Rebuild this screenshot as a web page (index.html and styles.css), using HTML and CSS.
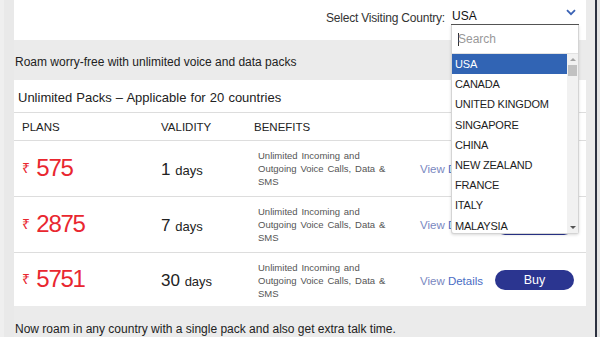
FILE: index.html
```html
<!DOCTYPE html>
<html>
<head>
<meta charset="utf-8">
<link rel="stylesheet" href="styles.css">
</head>
<body>
<div class="frame">
  <div class="gutter"></div>
  <main class="panel">
    <div class="top">
      <span class="select-label">Select Visiting Country:</span>
      <div class="select">
        <span class="select-value">USA</span>
        <svg class="chev" width="10" height="7" viewBox="0 0 10 7"><path d="M1 1.2 L5 5.2 L9 1.2" fill="none" stroke="#3b63b5" stroke-width="1.8"/></svg>
        <div class="dropdown">
          <div class="search"><span class="caret"></span><span class="ph">Search</span></div>
          <div class="list">
            <ul class="options">
              <li class="active">USA</li>
              <li>CANADA</li>
              <li>UNITED KINGDOM</li>
              <li>SINGAPORE</li>
              <li>CHINA</li>
              <li>NEW ZEALAND</li>
              <li>FRANCE</li>
              <li>ITALY</li>
              <li>MALAYSIA</li>
            </ul>
            <div class="scrollbar">
              <span class="arrow up"></span>
              <span class="thumb"></span>
              <span class="track"></span>
              <span class="arrow down"></span>
            </div>
          </div>
        </div>
      </div>
    </div>
    <p class="intro">Roam worry-free with unlimited voice and data packs</p>
    <section class="card">
      <h2 class="card-title">Unlimited Packs – Applicable for 20 countries</h2>
      <div class="row head">
        <span>PLANS</span><span>VALIDITY</span><span>BENEFITS</span><span></span><span></span>
      </div>
      <div class="row">
        <span class="price"><small>₹</small> 575</span>
        <span class="validity">1 <small>days</small></span>
        <span class="benefit">Unlimited Incoming and Outgoing Voice Calls, Data &amp; SMS</span>
        <span class="details"><span class="v">View</span> <span class="d">Details</span></span>
        <span class="buy-cell"><button class="buy">Buy</button></span>
      </div>
      <div class="row">
        <span class="price"><small>₹</small> 2875</span>
        <span class="validity">7 <small>days</small></span>
        <span class="benefit">Unlimited Incoming and Outgoing Voice Calls, Data &amp; SMS</span>
        <span class="details"><span class="v">View</span> <span class="d">Details</span></span>
        <span class="buy-cell"><button class="buy">Buy</button></span>
      </div>
      <div class="row last">
        <span class="price"><small>₹</small> 5751</span>
        <span class="validity">30 <small>days</small></span>
        <span class="benefit">Unlimited Incoming and Outgoing Voice Calls, Data &amp; SMS</span>
        <span class="details"><span class="v">View</span> <span class="d">Details</span></span>
        <span class="buy-cell"><button class="buy">Buy</button></span>
      </div>
    </section>
    <p class="note">Now roam in any country with a single pack and also get extra talk time.</p>
  </main>
  <div class="gap"></div>
  <div class="edge"></div>
  <div class="rest"></div>
</div>
</body>
</html>
```

FILE: styles.css
```css
html, body {
  margin: 0;
  padding: 0;
}
body {
  background: #ebebeb;
  font-family: "Liberation Sans", Arial, sans-serif;
  color: #222;
  width: 600px;
  height: 337px;
  overflow: hidden;
}
.frame {
  display: flex;
  height: 337px;
}
.gutter {
  flex: 0 0 14px;
  background: linear-gradient(to right, #efefef 0 4px, #e9e9e9 4px);
}
.panel {
  flex: 0 0 572px;
  display: flex;
  flex-direction: column;
}
.gap {
  flex: 0 0 9px;
  background: #ebebeb;
}
.edge {
  flex: 0 0 2px;
  background: #2c3140;
}
.rest {
  flex: 1;
  background: #e4e4e4;
}

/* top */
.top {
  background: #fff;
  height: 40px;
  display: flex;
  justify-content: flex-end;
  align-items: flex-start;
  padding-right: 7px;
  box-sizing: border-box;
}
.select-label {
  font-size: 12px;
  color: #333;
  margin-top: 11px;
  margin-right: 6px;
  letter-spacing: -0.2px;
}
.select {
  position: relative;
  width: 128px;
  height: 25px;
  border-bottom: 1px solid #555;
  box-sizing: border-box;
  display: flex;
  align-items: flex-start;
  justify-content: space-between;
  padding: 9px 0 0 1px;
}
.select-value {
  font-size: 12px;
  color: #111;
}
.chev {
  margin-top: 0px;
  margin-right: 3px;
}
.dropdown {
  position: absolute;
  left: 0;
  top: 25px;
  width: 128px;
  height: 209px;
  background: #fff;
  border: 1px solid #d4d4d4;
  border-top: none;
  box-sizing: border-box;
  box-shadow: 0 1px 3px rgba(0,0,0,0.15);
  border-radius: 0 0 3px 3px;
  display: flex;
  flex-direction: column;
  z-index: 5;
}
.search {
  height: 28px;
  border-bottom: 1px solid #e2e2e2;
  display: flex;
  align-items: center;
  padding-left: 6px;
  font-size: 12px;
  color: #999;
}
.caret {
  width: 1px;
  height: 13px;
  background: #333;
  margin-right: -1px;
}
.list {
  flex: 1;
  display: flex;
  overflow: hidden;
}
.options {
  list-style: none;
  margin: 0;
  padding: 0;
  flex: 1;
}
.options li {
  height: 20.2px;
  line-height: 21px;
  font-size: 11px;
  padding-left: 3px;
  color: #1d1d1d;
  letter-spacing: -0.2px;
}
.options li.active {
  background: #3164b4;
  color: #fff;
}
.scrollbar {
  flex: 0 0 11px;
  background: #f1f1f1;
  display: flex;
  flex-direction: column;
  align-items: center;
}
.arrow {
  width: 0;
  height: 0;
  border-left: 3px solid transparent;
  border-right: 3px solid transparent;
  margin: 4px 0;
}
.arrow.up { border-bottom: 3px solid #a3a3a3; }
.arrow.down { border-top: 3px solid #555; }
.thumb {
  width: 9px;
  height: 11px;
  background: #c1c1c1;
}
.track { flex: 1; }

/* intro */
.intro {
  margin: 0;
  height: 40px;
  line-height: 45px;
  font-size: 12px;
  color: #222;
  padding-left: 1px;
}

/* card */
.card {
  background: #fff;
  height: 226px;
}
.card-title {
  margin: 0;
  font-weight: normal;
  font-size: 13px;
  color: #222;
  height: 33px;
  line-height: 35px;
  padding-left: 4px;
  border-bottom: 1px solid #ddd;
  box-sizing: border-box;
  word-spacing: 0.5px;
}
.row {
  display: grid;
  grid-template-columns: 139px 93px 166px 75px 79px;
  padding-left: 8px;
  height: 56px;
  align-items: center;
  border-bottom: 1px solid #ddd;
  box-sizing: border-box;
}
.row.last { border-bottom: none; height: 54px; }
.row.head {
  height: 28px;
  font-size: 11.5px;
  color: #222;
  padding-top: 1px;
}
.price {
  color: #e9272f;
  font-size: 24px;
  line-height: 1;
  letter-spacing: -1.3px;
  margin-top: -2px;
}
.price small {
  font-size: 14px;
  vertical-align: 3px;
  letter-spacing: 0;
  margin-right: 1px;
}
.validity {
  font-size: 17px;
  color: #222;
  padding-top: 2px;
}
.validity small {
  font-size: 13px;
}
.benefit {
  font-size: 9.5px;
  line-height: 13px;
  color: #555;
  padding-left: 4px;
  max-width: 128px;
  word-spacing: 1.2px;
}
.details {
  font-size: 11.5px;
  padding-top: 1px;
}
.details .v { color: #7a88bf; }
.details .d { color: #4a6dc4; }
.buy {
  width: 79px;
  height: 20px;
  border: none;
  border-radius: 10px;
  background: #2b3590;
  color: #fff;
  font-family: "Liberation Sans", Arial, sans-serif;
  font-size: 12.5px;
  padding: 0;
}

.note {
  margin: 0;
  font-size: 12px;
  padding-top: 16px;
  padding-left: 1px;
}
```
